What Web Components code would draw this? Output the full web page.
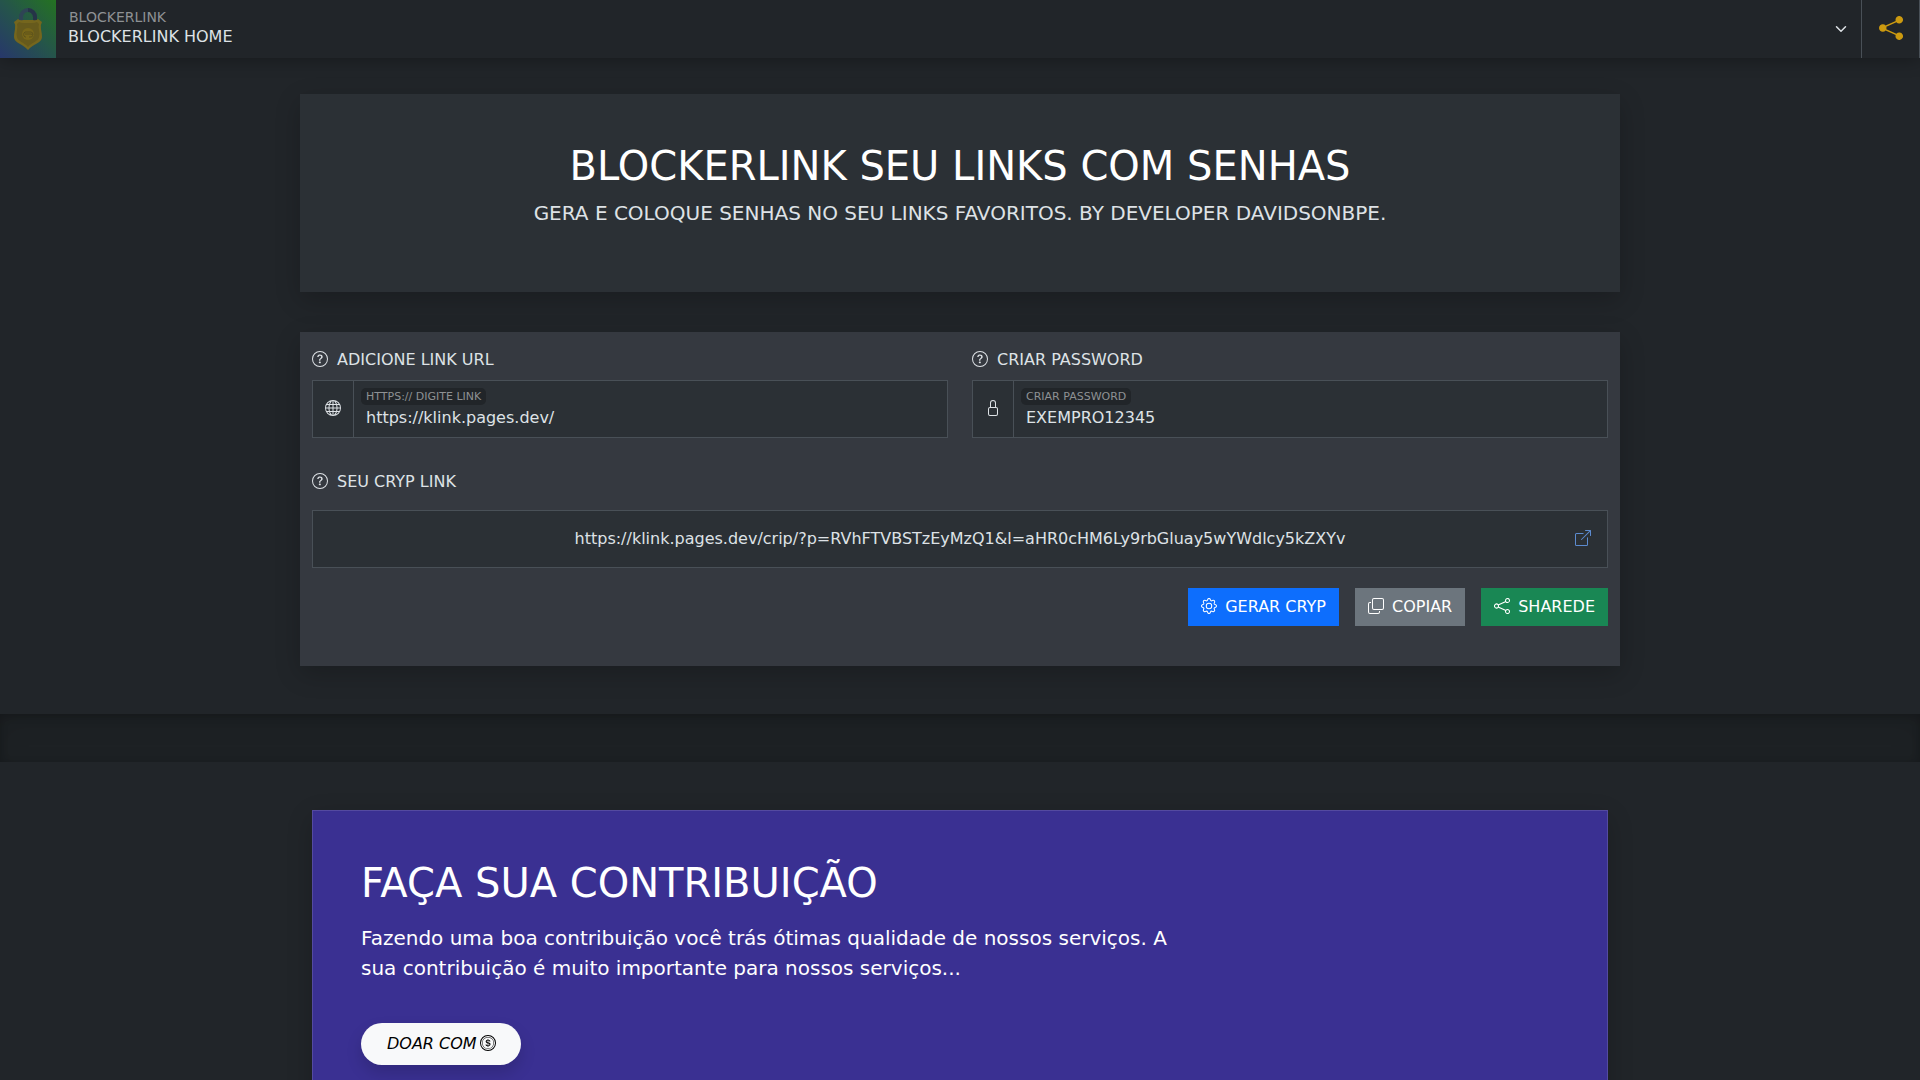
<!DOCTYPE html>
<html lang="pt-br">
<head>
<meta charset="utf-8">
<meta name="viewport" content="width=device-width, initial-scale=1">
<title>BLOCKERLINK HOME</title>
<style>
    body {
        margin: 0;
        background: #212529;
        color: #dee2e6;
        font: 16px/24px "DejaVu Sans", sans-serif;
    }
    main {
        display: flex;
        flex-direction: column;
        gap: 40px;
        max-width: 1320px;
        margin: 0 auto;
        padding: 36px 0 48px;
    }
    .divider {
        height: 48px;
        background: #1d2124;
        box-shadow: inset 0 8px 24px rgba(0, 0, 0, .1), inset 0 2px 8px rgba(0, 0, 0, .2);
    }
    .support {
        max-width: 1296px;
        margin: 0 auto;
        padding: 48px 0;
    }
</style>
</head>
<body>

<bl-header brand="BLOCKERLINK">
    <bl-logo slot="logo"></bl-logo>
</bl-header>

<main>
    <bl-hero>
        <span slot="title">BLOCKERLINK SEU LINKS COM SENHAS</span>
        GERA E COLOQUE SENHAS NO SEU LINKS FAVORITOS. BY DEVELOPER DAVIDSONBPE.
    </bl-hero>
    <bl-panel>
        <bl-field slot="fields" icon="globe" hint="HTTPS:// DIGITE LINK" value="https://klink.pages.dev/">ADICIONE LINK URL</bl-field>
        <bl-field slot="fields" icon="lock" hint="CRIAR PASSWORD" value="EXEMPRO12345">CRIAR PASSWORD</bl-field>
        <bl-result href="https://klink.pages.dev/crip/?p=RVhFTVBSTzEyMzQ1&amp;l=aHR0cHM6Ly9rbGluay5wYWdlcy5kZXYv">SEU CRYP LINK</bl-result>
        <bl-button slot="actions" icon="gear" kind="primary">GERAR CRYP</bl-button>
        <bl-button slot="actions" icon="copy" kind="secondary">COPIAR</bl-button>
        <bl-button slot="actions" icon="share" kind="success">SHAREDE</bl-button>
    </bl-panel>
</main>

<div class="divider"></div>

<section class="support">
    <bl-donate>
        <span slot="title">FAÇA SUA CONTRIBUIÇÃO</span>
        Fazendo uma boa contribuição você trás ótimas qualidade de nossos serviços. A sua contribuição é muito importante para nossos serviços...
        <bl-button slot="action" icon="coin" kind="light">DOAR COM</bl-button>
    </bl-donate>
</section>

<script>
const ICONS = {
    question: '<path d="M8 15A7 7 0 1 1 8 1a7 7 0 0 1 0 14m0 1A8 8 0 1 0 8 0a8 8 0 0 0 0 16"/><path d="M5.255 5.786a.237.237 0 0 0 .241.247h.825c.138 0 .248-.113.266-.25.09-.656.54-1.134 1.342-1.134.686 0 1.314.343 1.314 1.168 0 .635-.374.927-.965 1.371-.673.489-1.206 1.06-1.168 1.987l.003.217a.25.25 0 0 0 .25.246h.811a.25.25 0 0 0 .25-.25v-.105c0-.718.273-.927 1.01-1.486.609-.463 1.244-.977 1.244-2.056 0-1.511-1.276-2.241-2.673-2.241-1.267 0-2.655.59-2.75 2.286m1.557 5.763c0 .533.425.927 1.01.927.609 0 1.028-.394 1.028-.927 0-.552-.42-.94-1.029-.94-.584 0-1.009.388-1.009.94"/>',
    globe: '<path d="M0 8a8 8 0 1 1 16 0A8 8 0 0 1 0 8m7.5-6.923c-.67.204-1.335.82-1.887 1.855A8 8 0 0 0 5.145 4H7.5zM4.09 4a9.3 9.3 0 0 1 .64-1.539 7 7 0 0 1 .597-.933A7.03 7.03 0 0 0 2.255 4zm-.582 3.5c.03-.877.138-1.718.312-2.5H1.674a7 7 0 0 0-.656 2.5zM4.847 5a12.5 12.5 0 0 0-.338 2.5H7.5V5zM8.5 5v2.5h2.99a12.5 12.5 0 0 0-.337-2.5zM4.51 8.5a12.5 12.5 0 0 0 .337 2.5H7.5V8.5zm3.99 0V11h2.653c.187-.765.306-1.608.338-2.5zM5.145 12q.208.58.468 1.068c.552 1.035 1.218 1.65 1.887 1.855V12zm.182 2.472a7 7 0 0 1-.597-.933A9.3 9.3 0 0 1 4.09 12H2.255a7 7 0 0 0 3.072 2.472M3.82 11a13.7 13.7 0 0 1-.312-2.5h-2.49c.062.89.291 1.733.656 2.5zm6.853 3.472A7 7 0 0 0 13.745 12H11.91a9.3 9.3 0 0 1-.64 1.539 7 7 0 0 1-.597.933M8.5 12v2.923c.67-.204 1.335-.82 1.887-1.855q.26-.487.468-1.068zm3.68-1h2.146c.365-.767.594-1.61.656-2.5h-2.49a13.7 13.7 0 0 1-.312 2.5m2.802-3.5a7 7 0 0 0-.656-2.5H12.18c.174.782.282 1.623.312 2.5zM11.27 2.461c.247.464.462.98.64 1.539h1.835a7 7 0 0 0-3.072-2.472c.218.284.418.598.597.933M10.855 4a8 8 0 0 0-.468-1.068C9.835 1.897 9.17 1.282 8.5 1.077V4z"/>',
    lock: '<path d="M8 1a2 2 0 0 1 2 2v4H6V3a2 2 0 0 1 2-2m3 6V3a3 3 0 0 0-6 0v4a2 2 0 0 0-2 2v5a2 2 0 0 0 2 2h6a2 2 0 0 0 2-2V9a2 2 0 0 0-2-2M5 8h6a1 1 0 0 1 1 1v5a1 1 0 0 1-1 1H5a1 1 0 0 1-1-1V9a1 1 0 0 1 1-1"/>',
    open: '<path d="M8.636 3.5a.5.5 0 0 0-.5-.5H1.5A1.5 1.5 0 0 0 0 4.5v10A1.5 1.5 0 0 0 1.5 16h10a1.5 1.5 0 0 0 1.5-1.5V7.864a.5.5 0 0 0-1 0V14.5a.5.5 0 0 1-.5.5h-10a.5.5 0 0 1-.5-.5v-10a.5.5 0 0 1 .5-.5h6.636a.5.5 0 0 0 .5-.5"/><path d="M16 .5a.5.5 0 0 0-.5-.5h-5a.5.5 0 0 0 0 1h3.793L6.146 9.146a.5.5 0 1 0 .708.708L15 1.707V5.5a.5.5 0 0 0 1 0z"/>',
    gear: '<path d="M8 4.754a3.246 3.246 0 1 0 0 6.492 3.246 3.246 0 0 0 0-6.492M5.754 8a2.246 2.246 0 1 1 4.492 0 2.246 2.246 0 0 1-4.492 0"/><path d="M9.796 1.343c-.527-1.79-3.065-1.79-3.592 0l-.094.319a.873.873 0 0 1-1.255.52l-.292-.16c-1.64-.892-3.433.902-2.54 2.541l.159.292a.873.873 0 0 1-.52 1.255l-.319.094c-1.79.527-1.79 3.065 0 3.592l.319.094a.873.873 0 0 1 .52 1.255l-.16.292c-.892 1.64.901 3.434 2.541 2.54l.292-.159a.873.873 0 0 1 1.255.52l.094.319c.527 1.79 3.065 1.79 3.592 0l.094-.319a.873.873 0 0 1 1.255-.52l.292.16c1.64.893 3.434-.902 2.54-2.541l-.159-.292a.873.873 0 0 1 .52-1.255l.319-.094c1.79-.527 1.79-3.065 0-3.592l-.319-.094a.873.873 0 0 1-.52-1.255l.16-.292c.893-1.64-.902-3.433-2.541-2.54l-.292.159a.873.873 0 0 1-1.255-.52zm-2.633.283c.246-.835 1.428-.835 1.674 0l.094.319a1.873 1.873 0 0 0 2.693 1.115l.291-.16c.764-.415 1.6.42 1.184 1.185l-.159.292a1.873 1.873 0 0 0 1.116 2.692l.318.094c.835.246.835 1.428 0 1.674l-.319.094a1.873 1.873 0 0 0-1.115 2.693l.16.291c.415.764-.42 1.6-1.185 1.184l-.291-.159a1.873 1.873 0 0 0-2.693 1.116l-.094.318c-.246.835-1.428.835-1.674 0l-.094-.319a1.873 1.873 0 0 0-2.692-1.115l-.292.16c-.764.415-1.6-.42-1.184-1.185l.159-.291A1.873 1.873 0 0 0 1.945 8.93l-.319-.094c-.835-.246-.835-1.428 0-1.674l.319-.094A1.873 1.873 0 0 0 3.06 4.377l-.16-.292c-.415-.764.42-1.6 1.185-1.184l.292.159a1.873 1.873 0 0 0 2.692-1.115z"/>',
    copy: '<path fill-rule="evenodd" d="M4 2a2 2 0 0 1 2-2h8a2 2 0 0 1 2 2v8a2 2 0 0 1-2 2H6a2 2 0 0 1-2-2zm2-1a1 1 0 0 0-1 1v8a1 1 0 0 0 1 1h8a1 1 0 0 0 1-1V2a1 1 0 0 0-1-1zM2 5a1 1 0 0 0-1 1v8a1 1 0 0 0 1 1h8a1 1 0 0 0 1-1v-1h1v1a2 2 0 0 1-2 2H2a2 2 0 0 1-2-2V6a2 2 0 0 1 2-2h1v1z"/>',
    share: '<path d="M13.5 1a1.5 1.5 0 1 0 0 3 1.5 1.5 0 0 0 0-3M11 2.5a2.5 2.5 0 1 1 .603 1.628l-6.718 3.12a2.5 2.5 0 0 1 0 1.504l6.718 3.12a2.5 2.5 0 1 1-.488.876l-6.718-3.12a2.5 2.5 0 1 1 0-3.256l6.718-3.12A2.5 2.5 0 0 1 11 2.5m-8.5 4a1.5 1.5 0 1 0 0 3 1.5 1.5 0 0 0 0-3m11 5.5a1.5 1.5 0 1 0 0 3 1.5 1.5 0 0 0 0-3"/>',
    'share-fill': '<path d="M11 2.5a2.5 2.5 0 1 1 .603 1.628l-6.718 3.12a2.5 2.5 0 0 1 0 1.504l6.718 3.12a2.5 2.5 0 1 1-.488.876l-6.718-3.12a2.5 2.5 0 1 1 0-3.256l6.718-3.12A2.5 2.5 0 0 1 11 2.5"/>',
    chevron: '<path fill="none" stroke="currentColor" stroke-linecap="round" stroke-linejoin="round" stroke-width="2" d="m2 5 6 6 6-6"/>',
    coin: '<path d="M5.5 9.511c.076.954.83 1.697 2.182 1.785V12h.6v-.709c1.4-.098 2.218-.846 2.218-1.932 0-.987-.626-1.496-1.745-1.76l-.473-.112V5.57c.6.068.982.396 1.074.85h1.052c-.076-.919-.864-1.638-2.126-1.716V4h-.6v.719c-1.195.117-2.01.836-2.01 1.853 0 .9.606 1.472 1.613 1.707l.397.098v2.034c-.615-.093-1.022-.43-1.114-.9zm2.177-2.166c-.59-.137-.91-.416-.91-.836 0-.47.345-.822.915-.925v1.76h-.005zm.692 1.193c.717.166 1.048.435 1.048.91 0 .542-.412.914-1.135.982V8.518z"/><path d="M8 15A7 7 0 1 1 8 1a7 7 0 0 1 0 14m0 1A8 8 0 1 0 8 0a8 8 0 0 0 0 16"/><path d="M8 13.5a5.5 5.5 0 1 1 0-11 5.5 5.5 0 0 1 0 11m0 .5A6 6 0 1 0 8 2a6 6 0 0 0 0 12"/>'
};

// shared base: each element only supplies its template
class BL_Element extends HTMLElement {

    constructor() {
        super();
        this.shadow = this.attachShadow({mode: 'open'});
    }

    // get an attribute value if it is set, otherwise assume empty string
    attrib(name) {
        return this.getAttribute(name) || '';
    }

    connectedCallback() {
        this.shadow.innerHTML = this.template();
        this.ready();
    }

    // hook for binding events once rendered
    ready() {}

}

class BL_Icon extends BL_Element {
    template() {
        return `<style>
                :host{display:inline-block;width:16px;height:16px;vertical-align:-2px}
                svg{display:block;width:100%;height:100%}
            </style>
            <svg viewBox="0 0 16 16" fill="currentColor" aria-hidden="true">${ICONS[this.attrib('name')]}</svg>`;
    }
}

// padlock with a shield body, on the green/blue gradient
class BL_Logo extends BL_Element {
    template() {
        return `<style>
                :host{display:grid;place-items:center;width:56px;background:linear-gradient(to top right,#27376b,#25544b 50%,#247321)}
                svg{display:block;width:28px;height:44px}
            </style>
            <svg viewBox="0 0 28 44" aria-hidden="true">
                <path d="M7 15v-5a7 7 0 0 1 14 0v5" fill="none" stroke="#2e4455" stroke-width="4"/>
                <path d="M14 3a7 7 0 0 1 7 7v5" fill="none" stroke="#253447" stroke-width="4"/>
                <path d="M4 12q2 2 5 1h10q3 1 5-1l4 3q-2 3-1 7 1 5 1 8c0 6-9 7-14 13C9 37 0 36 0 30q0-3 1-8 1-4-1-7z" fill="#75661d"/>
                <path d="M5 15q2 1 5 1h8q3 0 5-1l2 2q-1 3 0 6 1 4 0 7c0 4-7 5-11 10C10 35 3 34 3 30q-1-3 0-7 1-3 0-6z" fill="#665a1c"/>
                <circle cx="14" cy="27" r="6" fill="#786719"/>
                <path d="M12 30h-1a3 3 0 0 1 0-5h6q2 0 2 3M11 27h6a1 1 0 0 1 0 3h-2" fill="none" stroke="#5c521b"/>
            </svg>`;
    }
}

class BL_Header extends BL_Element {
    template() {
        return `<style>
                :host{display:flex;height:58px;background:#212529;box-shadow:0 2px 16px rgba(0,0,0,.3)}
                .picker{flex:1;display:grid;align-items:center}
                .picker > *{grid-area:1/1}
                label{align-self:start;padding:7px 13px 0;font-size:14px;line-height:20px;color:#8e9194;pointer-events:none;z-index:1}
                select{appearance:none;width:100%;height:58px;margin:0;padding:16px 36px 0 12px;border:0;border-radius:0;background:none;color:inherit;font:inherit}
                bl-icon{justify-self:end;width:12px;height:12px;margin-right:14px;pointer-events:none}
                button{display:grid;justify-content:center;width:59px;margin:0;padding:16px 0;border:solid #495057;border-width:0 1px;background:none;color:#cc9a10;cursor:pointer;align-content:start}
                button bl-icon{width:24px;height:24px;margin:0}
            </style>
            <slot name="logo"></slot>
            <div class="picker">
                <label for="page">${this.attrib('brand')}</label>
                <select id="page"><option>BLOCKERLINK HOME</option></select>
                <bl-icon name="chevron"></bl-icon>
            </div>
            <button type="button" aria-label="Compartilhar"><bl-icon name="share-fill"></bl-icon></button>`;
    }
}

class BL_Hero extends BL_Element {
    template() {
        return `<style>
                :host{display:block;padding:48px 48px 64px;background:#2b3035;text-align:center;box-shadow:0 8px 24px rgba(0,0,0,.2)}
                h1{margin:0 0 8px;font-size:40px;line-height:48px;font-weight:400;color:#fff}
                p{margin:0;font-size:20px;line-height:30px}
            </style>
            <h1><slot name="title"></slot></h1>
            <p><slot></slot></p>`;
    }
}

class BL_Panel extends BL_Element {
    template() {
        return `<style>
                :host{display:block;padding:16px 12px 40px;background:#353940;box-shadow:0 8px 24px rgba(0,0,0,.2)}
                .fields{display:grid;grid-template-columns:1fr 1fr;gap:24px;margin-bottom:32px}
                .actions{display:flex;justify-content:flex-end;gap:16px;margin-top:20px}
            </style>
            <div class="fields"><slot name="fields"></slot></div>
            <slot></slot>
            <div class="actions"><slot name="actions"></slot></div>`;
    }
}

class BL_Field extends BL_Element {

    // keep the value attribute in step with the text box
    ready() {
        this.input = this.shadow.querySelector('input');
        this.input.addEventListener('change', () => this.setAttribute('value', this.input.value));
    }

    template() {
        return `<style>
                :host{display:block}
                .caption{display:block;margin-bottom:8px}
                .caption bl-icon{margin-right:9px}
                .group{display:flex;border:1px solid #495057;background:#2b3035}
                .addon{padding:16px 12px;border-right:1px solid #495057}
                .box{flex:1;display:flex;flex-direction:column;align-items:flex-start;gap:1px;padding:7px 0}
                .hint{margin-left:7px;padding:0 5px;border-radius:5px;background:#212529;color:#8e9194;font-size:11px;line-height:17px}
                input{box-sizing:border-box;width:100%;height:24px;margin:0;padding:0 12px;border:0;outline:0;background:none;color:inherit;font:inherit}
            </style>
            <label class="caption" for="box"><bl-icon name="question"></bl-icon><slot></slot></label>
            <div class="group">
                <span class="addon"><bl-icon name="${this.attrib('icon')}"></bl-icon></span>
                <div class="box">
                    <label class="hint" for="box">${this.attrib('hint')}</label>
                    <input id="box" type="text" value="${this.attrib('value')}">
                </div>
            </div>`;
    }

}

class BL_Result extends BL_Element {
    template() {
        const href = this.attrib('href').replace(/&/g, '&amp;');
        return `<style>
                :host{display:block}
                .caption{margin-bottom:16px}
                .caption bl-icon{margin-right:9px}
                .box{display:grid;grid-template-columns:1fr auto 1fr;align-items:center;padding:16px;border:1px solid #495057;background:#2b3035}
                output{grid-column:2}
                a{justify-self:end;color:#5c8bd0}
            </style>
            <div class="caption"><bl-icon name="question"></bl-icon><slot></slot></div>
            <div class="box">
                <output>${href}</output>
                <a href="${href}" aria-label="Abrir link"><bl-icon name="open"></bl-icon></a>
            </div>`;
    }
}

class BL_Button extends BL_Element {

    // the coin follows its text, every other icon leads
    template() {
        const icon = `<bl-icon name="${this.attrib('icon')}"></bl-icon>`;
        const light = this.attrib('kind') === 'light';
        return `<style>
                :host{display:inline-block}
                button{display:block;margin:0;padding:7px 13px;border:0;background:var(--bg);color:#fff;font:inherit;cursor:pointer}
                bl-icon{margin-right:8px}
                :host([kind=primary]){--bg:#0d6efd}
                :host([kind=secondary]){--bg:#6c757d}
                :host([kind=success]){--bg:#198754}
                :host([kind=light]){--bg:#f8f9fa}
                :host([kind=light]) button{padding:9px 25px 9px 26px;border-radius:21px;color:#000;font-style:italic;box-shadow:0 8px 16px rgba(0,0,0,.15)}
                :host([kind=light]) bl-icon{margin:0 0 0 3px}
            </style>
            <button type="button">${light ? '' : icon}<slot></slot>${light ? icon : ''}</button>`;
    }

}

class BL_Donate extends BL_Element {
    template() {
        return `<style>
                :host{display:block;padding:48px;border:1px solid #544aa0;background:#3a3092;color:#fff;box-shadow:0 8px 24px rgba(0,0,0,.2)}
                h2{margin:0 0 16px;font-size:40px;line-height:48px;font-weight:400}
                p{max-width:68%;margin:0 0 40px;font-size:20px;line-height:30px}
            </style>
            <h2><slot name="title"></slot></h2>
            <p><slot></slot></p>
            <slot name="action"></slot>`;
    }
}

customElements.define('bl-icon', BL_Icon);
customElements.define('bl-logo', BL_Logo);
customElements.define('bl-header', BL_Header);
customElements.define('bl-hero', BL_Hero);
customElements.define('bl-panel', BL_Panel);
customElements.define('bl-field', BL_Field);
customElements.define('bl-result', BL_Result);
customElements.define('bl-button', BL_Button);
customElements.define('bl-donate', BL_Donate);
</script>
</body>
</html>
